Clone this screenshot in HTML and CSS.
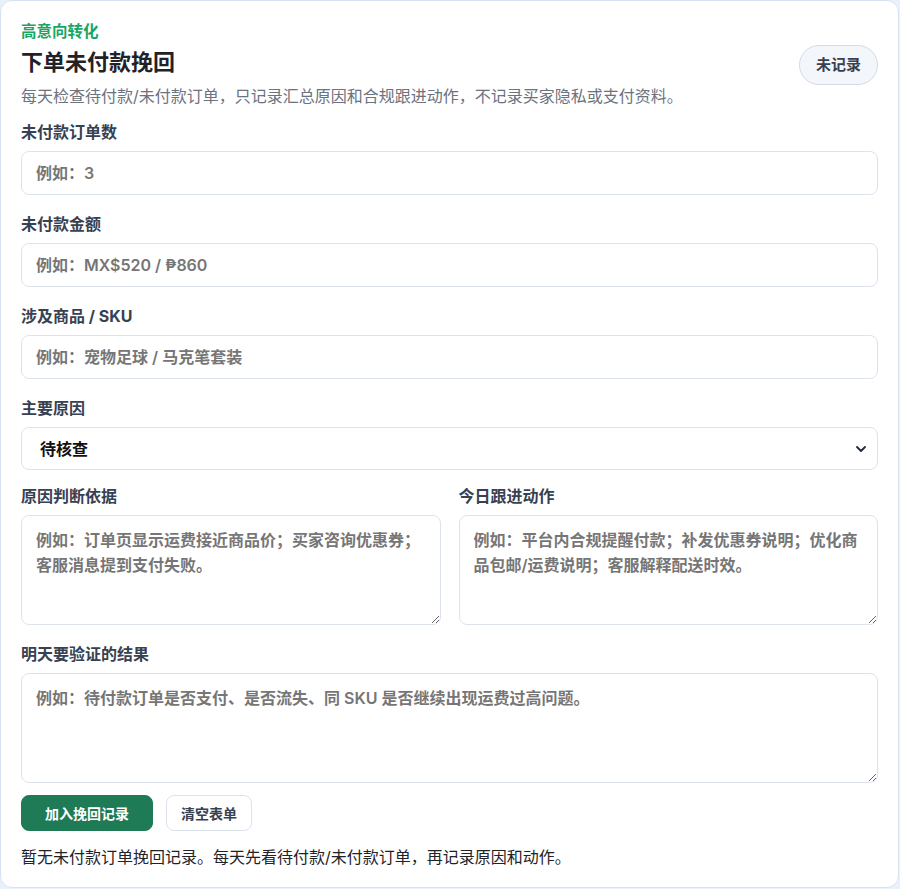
FILE: index.html
```html
<!DOCTYPE html>
<html lang="zh-CN">
<head>
    <meta charset="UTF-8">
    <meta name="viewport" content="width=device-width, initial-scale=1.0">
    <title>下单未付款挽回</title>
    <link rel="stylesheet" href="styles.css">
</head>
<body>
    <div class="card">
        <div class="card-head">
            <div>
                <div class="eyebrow">高意向转化</div>
                <h2 class="title">下单未付款挽回</h2>
                <p class="desc">每天检查待付款/未付款订单，只记录汇总原因和合规跟进动作，不记录买家隐私或支付资料。</p>
            </div>
            <span class="badge">未记录</span>
        </div>

        <form class="form" id="unpaid-form">
            <label class="field">
                <span class="field-label">未付款订单数</span>
                <input type="text" placeholder="例如：3">
            </label>

            <label class="field">
                <span class="field-label">未付款金额</span>
                <input type="text" placeholder="例如：MX$520 / ₱860">
            </label>

            <label class="field">
                <span class="field-label">涉及商品 / SKU</span>
                <input type="text" placeholder="例如：宠物足球 / 马克笔套装">
            </label>

            <label class="field">
                <span class="field-label">主要原因</span>
                <span class="select-wrap">
                    <select>
                        <option>待核查</option>
                        <option>运费过高</option>
                        <option>支付失败</option>
                        <option>等待优惠券</option>
                        <option>配送时效</option>
                    </select>
                    <svg class="chevron" width="10" height="6" viewBox="0 0 10 6">
                        <path d="M1 1l4 4 4-4" fill="none" stroke="#1f2937" stroke-width="1.8" stroke-linecap="round" stroke-linejoin="round"/>
                    </svg>
                </span>
            </label>

            <div class="field-row">
                <label class="field">
                    <span class="field-label">原因判断依据</span>
                    <textarea placeholder="例如：订单页显示运费接近商品价；买家咨询优惠券；客服消息提到支付失败。"></textarea>
                </label>
                <label class="field">
                    <span class="field-label">今日跟进动作</span>
                    <textarea placeholder="例如：平台内合规提醒付款；补发优惠券说明；优化商品包邮/运费说明；客服解释配送时效。"></textarea>
                </label>
            </div>

            <label class="field">
                <span class="field-label">明天要验证的结果</span>
                <textarea placeholder="例如：待付款订单是否支付、是否流失、同 SKU 是否继续出现运费过高问题。"></textarea>
            </label>

            <div class="actions">
                <button type="submit" class="btn btn-primary">加入挽回记录</button>
                <button type="reset" class="btn">清空表单</button>
            </div>
        </form>

        <p class="empty">暂无未付款订单挽回记录。每天先看待付款/未付款订单，再记录原因和动作。</p>
    </div>
</body>
</html>
```

FILE: styles.css
```css
body {
    margin: 0;
    background-color: #eaf1fb;
    font-family: Inter, "Noto Sans CJK SC", sans-serif;
    color: #1f2328;
}

.card {
    background: white;
    border: 1px solid #d6e2f2;
    border-radius: 12px;
    padding: 20px 20px 18px;
    box-sizing: border-box;
    width: 899px;
}

.card-head {
    display: flex;
    justify-content: space-between;
    align-items: center;
    margin-bottom: 13px;
}

.eyebrow {
    font-size: 15.5px;
    line-height: 22px;
    font-weight: 700;
    color: #1ba564;
}

.title {
    margin: 4px 0 0;
    font-size: 22px;
    line-height: 30px;
    font-weight: 700;
    color: #1f2328;
}

.desc {
    margin: 7px 0 0;
    font-size: 16px;
    line-height: 24px;
    color: #6b7280;
}

.badge {
    padding: 0 16px;
    height: 38px;
    line-height: 38px;
    border: 1px solid #d3dbe7;
    border-radius: 20px;
    background: #f3f6fb;
    font-size: 15px;
    font-weight: 700;
    color: #374151;
}

.form {
    display: flex;
    flex-direction: column;
    gap: 18px;
}

.field {
    display: flex;
    flex-direction: column;
    gap: 8px;
}

.field-label {
    font-size: 16px;
    line-height: 22px;
    font-weight: 700;
    color: #374151;
}

.field-row {
    display: grid;
    grid-template-columns: 1fr 1fr;
    gap: 18px;
}

input,
select,
textarea {
    box-sizing: border-box;
    width: 100%;
    border: 1px solid #dde3ec;
    border-radius: 8px;
    background: white;
    font-family: inherit;
    font-size: 16px;
    font-weight: 600;
    color: #1f2328;
    outline: none;
}

input {
    height: 44px;
    padding: 0 14px;
}

input::placeholder,
textarea::placeholder {
    color: #767676;
}

.select-wrap {
    position: relative;
    display: block;
    margin-bottom: -3px;
}

select {
    appearance: none;
    height: 43px;
    padding: 0 18px;
    color: #111;
}

.chevron {
    position: absolute;
    right: 12px;
    top: 19px;
    pointer-events: none;
}

textarea {
    height: 110px;
    padding: 12px 14px;
    line-height: 25px;
    resize: vertical;
}

input:focus,
select:focus,
textarea:focus {
    border-color: #1f7a56;
}

.actions {
    display: flex;
    gap: 13px;
    margin-top: -6px;
}

.btn {
    height: 36px;
    padding: 0 14px;
    border: 1px solid #dde3ec;
    border-radius: 8px;
    background: white;
    font-family: inherit;
    font-size: 14px;
    font-weight: 700;
    color: #374151;
    cursor: pointer;
}

.btn-primary {
    padding: 0 23px;
    background: #1f7a56;
    border-color: #1f7a56;
    color: white;
}

.empty {
    margin: 14px 0 0;
    font-size: 16px;
    line-height: 24px;
    color: #1f2328;
}
```
